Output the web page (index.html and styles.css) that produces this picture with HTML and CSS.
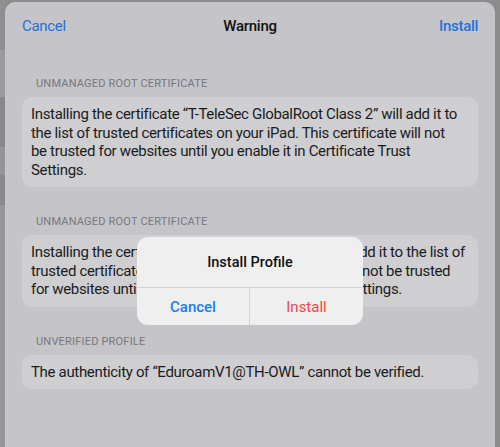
FILE: index.html
```html
<!DOCTYPE html>
<html lang="en">
<head>
<meta charset="utf-8">
<title>Warning</title>
<link rel="stylesheet" href="styles.css">
</head>
<body>
<div class="sheet">
  <header class="nav">
    <span class="nav-btn left">Cancel</span>
    <span class="nav-title">Warning</span>
    <span class="nav-btn right">Install</span>
  </header>
  <main class="content">
    <section class="group first">
      <h2 class="group-head">UNMANAGED ROOT CERTIFICATE</h2>
      <p class="card">Installing the certificate “T-TeleSec GlobalRoot Class 2” will add it to<br>the list of trusted certificates on your iPad. This certificate will not<br>be trusted for websites until you enable it in Certificate Trust<br>Settings.</p>
    </section>
    <section class="group">
      <h2 class="group-head">UNMANAGED ROOT CERTIFICATE</h2>
      <p class="card">Installing the certificate “USERTrust RSA Root” will add it to the list of<br>trusted certificates on your iPad. This certificate will not be trusted<br>for websites until you enable it in Certificate Trust Settings.</p>
    </section>
    <section class="group">
      <h2 class="group-head">UNVERIFIED PROFILE</h2>
      <p class="card">The authenticity of “EduroamV1@TH-OWL” cannot be verified.</p>
    </section>
  </main>
</div>
<div class="alert" role="alertdialog">
  <div class="alert-title">Install Profile</div>
  <div class="alert-actions">
    <span class="alert-btn cancel">Cancel</span>
    <span class="alert-btn install">Install</span>
  </div>
</div>
</body>
</html>
```
FILE: styles.css
```css
html, body {
  margin: 0;
  padding: 0;
}
body {
  width: 500px;
  height: 447px;
  overflow: hidden;
  font-family: "Roboto", "Liberation Sans", sans-serif;
  background:
    linear-gradient(to bottom,
      #8f8f8f 0 50px,
      #9b9b9b 50px 97px,
      #858987 97px 147px,
      #959595 147px 175px,
      #868a88 175px 205px,
      #969696 205px 447px) left top / 5px 100% no-repeat,
    #8c8c8c;
  position: relative;
}
.sheet {
  margin: 2px 5px 0;
  height: 445px;
  background: #c5c4c9;
  border-radius: 10px 10px 0 0;
  overflow: hidden;
}
.nav {
  height: 48px;
  display: grid;
  grid-template-columns: 1fr auto 1fr;
  align-items: center;
  padding: 0 17px;
  font-size: 15px;
  letter-spacing: -0.3px;
}
.nav-btn {
  color: #1f72da;
}
.nav-btn.right {
  justify-self: end;
  font-weight: 500;
}
.nav-title {
  font-weight: 500;
  color: #111;
}
.content {
  padding: 0 17px;
}
.group {
  margin-top: 28px;
}
.group.first {
  margin-top: 27px;
}
.group-head {
  margin: 0 0 6px;
  padding-left: 14px;
  font-size: 11px;
  line-height: 14px;
  font-weight: 400;
  color: #77777c;
  letter-spacing: 0.2px;
}
.card {
  margin: 0;
  background: #cfcfd1;
  border-radius: 10px;
  padding: 8px 6px 8px 9px;
  font-size: 15px;
  line-height: 18.5px;
  letter-spacing: -0.33px;
  white-space: nowrap;
  color: #1b1b1d;
}
.alert {
  position: absolute;
  left: 137px;
  top: 237px;
  width: 226px;
  height: 88px;
  background: #efeff0;
  border-radius: 11px;
  display: flex;
  flex-direction: column;
  overflow: hidden;
}
.alert-title {
  height: 51px;
  display: flex;
  align-items: center;
  justify-content: center;
  font-size: 14.5px;
  font-weight: 500;
  color: #111;
  border-bottom: 1px solid #d3d3d6;
  box-sizing: border-box;
}
.alert-actions {
  flex: 1;
  display: grid;
  grid-template-columns: 1fr 1fr;
}
.alert-btn {
  display: flex;
  align-items: center;
  justify-content: center;
  font-size: 15px;
}
.alert-btn.cancel {
  color: #1a7cf2;
  font-weight: 500;
  border-right: 1px solid #d3d3d6;
}
.alert-btn.install {
  color: #f04646;
}
```
